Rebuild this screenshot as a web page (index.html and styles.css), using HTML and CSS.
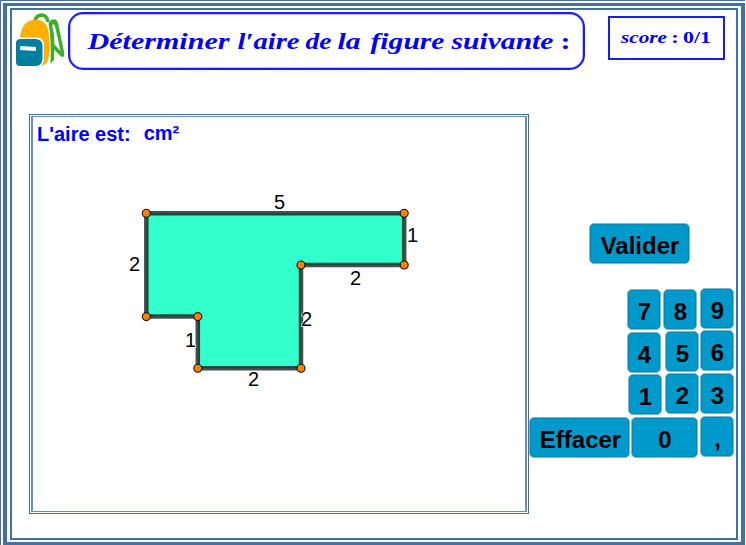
FILE: index.html
```
<!DOCTYPE html>
<html lang="fr">
<head>
<meta charset="utf-8">
<title>Aire de la figure</title>
<link rel="stylesheet" href="styles.css">
</head>
<body>
<div class="frame-outer"><div class="frame-middle"><div class="frame-inner">
  <header class="header">
    <svg class="bag" viewBox="0 0 50 56" width="50" height="56">
      <path d="M18.5 10 Q20 3 26 3 Q31 3.500 32 10" fill="none" stroke="#3dae2b" stroke-width="3.600"/>
      <path d="M32.500 11 Q35 7 38.500 7.300 Q41.500 8 42.500 13 L48.300 41 Q48.500 45 46.500 45 Q45 45 43.500 43 L38.200 37.500 L38 48 L34.500 51.500 Q35.500 27 32.500 11Z" fill="#3dae2b"/>
      <path d="M36.200 13.500 Q37.500 11 39 14 L44.500 39 L38.500 32.500 Q38.500 22 36.200 13.500Z" fill="#fff"/>
      <path d="M4 25 Q6 8 20 7.500 Q31 7.500 33 22 Q35 39 32 48 Q30 54 23 54 H4Z" fill="#ffb000"/>
      <path d="M4 25.500 H22 Q28 26.500 28 33 V47 Q28 53 23 55 H4Z" fill="#fff"/>
      <path d="M0 31 Q0 27.200 5 27 H20 Q26.500 27.500 26.500 34 V47 Q26 53.500 20 54 H4 Q0 54 0 50Z" fill="#007f9f"/>
      <path d="M4 34 L20 35 V39 L4 38Z" fill="#fff"/>
    </svg>
    <h1 class="title">
      <svg width="511" height="52" viewBox="70.5 14.5 511 52">
        <text x="87" y="48" textLength="142" lengthAdjust="spacingAndGlyphs">Déterminer</text>
        <text x="237" y="48" textLength="62" lengthAdjust="spacingAndGlyphs">l′aire</text>
        <text x="305" y="48" textLength="26" lengthAdjust="spacingAndGlyphs">de</text>
        <text x="337" y="48" textLength="23" lengthAdjust="spacingAndGlyphs">la</text>
        <text x="370" y="48" textLength="74" lengthAdjust="spacingAndGlyphs">figure</text>
        <text x="451" y="48" textLength="102" lengthAdjust="spacingAndGlyphs">suivante</text>
        <text class="upright" x="560" y="48" textLength="10" lengthAdjust="spacingAndGlyphs">:</text>
      </svg>
    </h1>
    <div class="score">
      <svg width="113" height="40" viewBox="610 18 113 40">
        <text x="621" y="43" textLength="46" lengthAdjust="spacingAndGlyphs">score</text>
        <text class="upright" x="671" y="43" textLength="8" lengthAdjust="spacingAndGlyphs">:</text>
        <text class="upright" x="683" y="43" textLength="28" lengthAdjust="spacingAndGlyphs">0/1</text>
      </svg>
    </div>
  </header>
  <main class="main">
    <section class="panel"><div class="panel-inner">
      <p class="answer"><span>L'aire est:</span><span class="unit">cm²</span></p>
      <svg class="figure" viewBox="33 150 492 361" width="492" height="361">
        <path class="shape" d="M146.3 213.3H404.2V265H301V368.2H197.8V316.6H146.3Z"/>
        <g class="vertices">
          <circle cx="146.3" cy="213.3" r="4"/><circle cx="404.2" cy="213.3" r="4"/>
          <circle cx="404.2" cy="265" r="4"/><circle cx="301" cy="265" r="4"/>
          <circle cx="301" cy="368.2" r="4"/><circle cx="197.8" cy="368.2" r="4"/>
          <circle cx="197.8" cy="316.6" r="4"/><circle cx="146.3" cy="316.6" r="4"/>
        </g>
        <g class="lengths">
          <text x="274" y="209">5</text><text x="407" y="242">1</text>
          <text x="350" y="285">2</text><text x="301" y="326">2</text>
          <text x="248" y="386">2</text><text x="185" y="347">1</text>
          <text x="129" y="271">2</text>
        </g>
      </svg>
    </div></section>
    <section class="controls">
      <button class="key wide validate">Valider</button>
      <div class="row row-top"><button class="key k7">7</button><button class="key k8">8</button><button class="key k9">9</button></div>
      <div class="row"><button class="key k4">4</button><button class="key k5">5</button><button class="key k6">6</button></div>
      <div class="row"><button class="key k1">1</button><button class="key k2">2</button><button class="key k3">3</button></div>
      <div class="row"><button class="key wide k-clear">Effacer</button><button class="key zero">0</button><button class="key comma">,</button></div>
    </section>
  </main>
</div></div></div>
</body>
</html>
```
FILE: styles.css
```
* { box-sizing: border-box; }
html { background: #fff; }
body { margin: 0; width: 746px; height: 545px; overflow: hidden; font-family: "Liberation Sans", sans-serif; }
svg { display: block; }
.frame-outer { width: 745px; height: 545px; border: solid #4472a0; border-width: 1px 0 0 1px; padding: 2px 0 0 2px; }
.frame-middle { height: 542px; border: solid #4472a0; border-width: 3px 4px 3px 4px; padding: 2px 3px; }
.frame-inner { height: 532px; border: 2px solid #4070a0; }

.header { display: flex; align-items: flex-start; height: 104px; padding-left: 4px; }
.bag { margin-top: 2px; }
.title { margin: 2px 0 0 2px; width: 517px; height: 58px; border: 2px solid #0000ff; border-radius: 15px; padding: 1px; box-shadow: inset 0 0 0 .5px #8080ff; border-color: #1a1aff; }
.title svg text, .score svg text { fill: #0000ff; font-family: "Liberation Serif", serif; font-weight: bold; font-style: italic; }
.title svg text { font-size: 24px; }
.score { margin: 6px 0 0 23px; width: 117px; height: 44px; border: 2px solid #1a1aff; }
.score svg text { font-size: 17px; }
.title svg .upright, .score svg .upright { font-style: normal; }

.main { display: flex; align-items: flex-start; padding-left: 17px; }
.panel { flex: none; width: 500px; height: 400px; border: 1px solid #4472a0; padding: 1px; }
.panel-inner { height: 396px; border: solid #6890b4; border-width: 1px 2px 1px 2px; }
.answer { display: flex; height: 33px; margin: 0; padding: 6px 0 0 4px; color: #0000ff; font-size: 20px; font-weight: bold; line-height: 23px; }
.unit { margin: -1px 0 0 13px; }
.shape { fill: #33ffcc; stroke: #000; stroke-opacity: .7; stroke-width: 4.5; }
.vertices circle { fill: #ff8000; stroke: #111; stroke-width: 1.1; }
.lengths text { font-size: 20px; fill: #000; stroke: #fff; stroke-width: 1.5; paint-order: stroke; }

.controls { flex: none; width: 206px; padding-top: 109px; }
.key { flex: none; width: 34px; height: 41px; margin: 0; padding: 4px 0 0 1px; border: 1px solid #80b8cc; border-radius: 5px; background: #0099cc; box-shadow: inset 0 0 0 1px #008ab8; color: #000; font: bold 24px/34px "Liberation Sans", sans-serif; text-align: center; }
.wide { width: 101px; }
.validate { display: block; margin-left: 60px; }
.row { display: flex; align-items: flex-start; height: 42px; }
.row-top { margin-top: 24px; height: 43px; }
.k7 { margin: 1px 0 0 98px; }
.k8 { margin: 1px 0 0 2px; }
.k9 { margin-left: 3px; }
.k4 { margin: 1px 0 0 98px; }
.k5 { margin-left: 4px; }
.k6 { margin: -1px 0 0 1px; }
.k1 { margin: 1px 0 0 99px; }
.k2 { margin-left: 3px; }
.k3 { margin-left: 1px; }
.k-clear { margin-top: 2px; padding-left: 2px; }
.zero { width: 67px; margin: 2px 0 0 1px; }
.comma { margin: 1px 0 0 2px; }
```
